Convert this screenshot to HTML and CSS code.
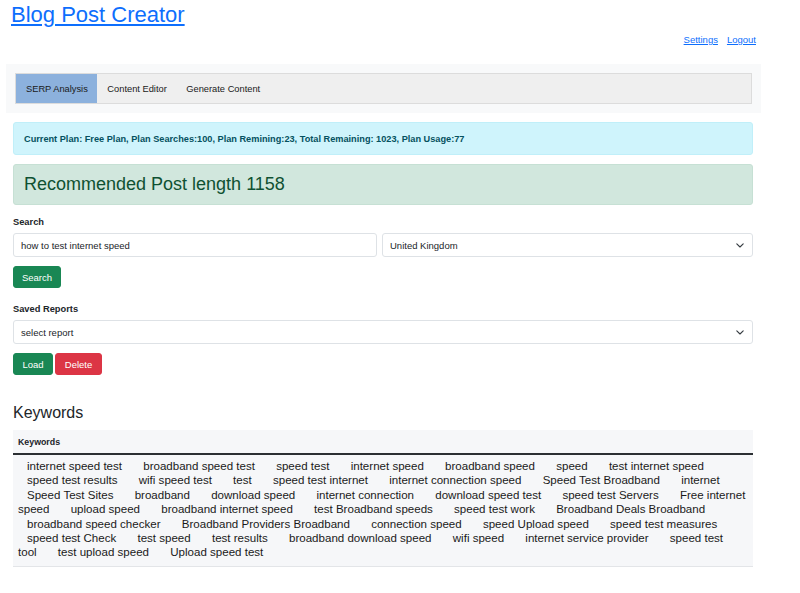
FILE: index.html
```html
<!DOCTYPE html>
<html>
<head>
<meta charset="utf-8">
<title>Blog Post Creator</title>
<link rel="stylesheet" href="styles.css">
</head>
<body>
<header class="top">
  <h1 class="brand"><a href="#">Blog Post Creator</a></h1>
  <div class="user-links"><a href="#">Settings</a><a href="#">Logout</a></div>
</header>
<nav class="nav-wrap">
  <div class="tabs">
    <span class="tab active">SERP Analysis</span>
    <span class="tab">Content Editor</span>
    <span class="tab">Generate Content</span>
  </div>
</nav>
<main class="content">
  <div class="alert alert-info">Current Plan: Free Plan, Plan Searches:100, Plan Remining:23, Total Remaining: 1023, Plan Usage:77</div>
  <div class="alert alert-success">Recommended Post length 1158</div>

  <div class="label label-search">Search</div>
  <div class="search-row">
    <div class="control">how to test internet speed</div>
    <div class="control select">
      <span>United Kingdom</span>
      <svg width="8" height="5" viewBox="0 0 8 5"><path d="M0.8 0.8 L4 4 L7.2 0.8" fill="none" stroke="#343a40" stroke-width="1.1" stroke-linecap="round" stroke-linejoin="round"/></svg>
    </div>
  </div>
  <div class="btn-row"><button class="btn btn-green">Search</button></div>

  <div class="label label-saved">Saved Reports</div>
  <div class="control select">
    <span>select report</span>
    <svg width="8" height="5" viewBox="0 0 8 5"><path d="M0.8 0.8 L4 4 L7.2 0.8" fill="none" stroke="#343a40" stroke-width="1.1" stroke-linecap="round" stroke-linejoin="round"/></svg>
  </div>
  <div class="btn-row btn-pair"><button class="btn btn-green">Load</button><button class="btn btn-red">Delete</button></div>

  <h2 class="kw-title">Keywords</h2>
  <div class="kw-table">
    <div class="kw-head">Keywords</div>
    <div class="kw-body"><span class="kw">internet speed test</span> <span class="kw">broadband speed test</span> <span class="kw">speed test</span> <span class="kw">internet speed</span> <span class="kw">broadband speed</span> <span class="kw">speed</span> <span class="kw">test internet speed</span> <span class="kw">speed test results</span> <span class="kw">wifi speed test</span> <span class="kw">test</span> <span class="kw">speed test internet</span> <span class="kw">internet connection speed</span> <span class="kw">Speed Test Broadband</span> <span class="kw">internet</span> <span class="kw">Speed Test Sites</span> <span class="kw">broadband</span> <span class="kw">download speed</span> <span class="kw">internet connection</span> <span class="kw">download speed test</span> <span class="kw">speed test Servers</span> <span class="kw">Free internet speed</span> <span class="kw">upload speed</span> <span class="kw">broadband internet speed</span> <span class="kw">test Broadband speeds</span> <span class="kw">speed test work</span> <span class="kw">Broadband Deals Broadband</span> <span class="kw">broadband speed checker</span> <span class="kw">Broadband Providers Broadband</span> <span class="kw">connection speed</span> <span class="kw">speed Upload speed</span> <span class="kw">speed test measures</span> <span class="kw">speed test Check</span> <span class="kw">test speed</span> <span class="kw">test results</span> <span class="kw">broadband download speed</span> <span class="kw">wifi speed</span> <span class="kw">internet service provider</span> <span class="kw">speed test tool</span> <span class="kw">test upload speed</span> <span class="kw">Upload speed test</span></div>
  </div>
</main>
</body>
</html>
```

FILE: styles.css
```css
* { box-sizing: border-box; }

body {
  margin: 0;
  font-family: "Liberation Sans", Arial, sans-serif;
  color: #212529;
  background: #fff;
}

a { color: #0d6efd; }

.top {
  padding: 2px 44px 0 11px;
}

.brand {
  margin: 0;
  font-size: 22px;
  line-height: 26px;
  font-weight: 400;
}

.user-links {
  display: flex;
  justify-content: flex-end;
  gap: 9px;
  margin-top: 5px;
  font-size: 9.5px;
  line-height: 13px;
}

.nav-wrap {
  margin: 18px 0 0 6px;
  width: 755px;
  height: 49px;
  background: #f8f9fa;
  padding: 9px;
}

.tabs {
  display: flex;
  height: 31px;
  background: #efefef;
  border: 1px solid #dcdcdc;
  font-size: 9.3px;
}

.tab {
  display: flex;
  align-items: center;
  padding: 0 9.5px 0 10px;
  color: #1a1a1a;
}

.tab.active {
  background: #8cb1dd;
}

.content {
  width: 740px;
  margin-left: 13px;
  padding-top: 9px;
}

.alert {
  border-radius: 3px;
  border: 1px solid transparent;
  padding: 0 10px;
  display: flex;
  align-items: center;
}

.alert-info {
  height: 33px;
  background: #cff4fc;
  border-color: #c0eff9;
  color: #055160;
  font-weight: 700;
  font-size: 9.2px;
}

.alert-success {
  margin-top: 9px;
  height: 41px;
  background: #d1e7dd;
  border-color: #c6e0d4;
  color: #0f5132;
  font-size: 18px;
}

.label {
  font-weight: 700;
  font-size: 9.3px;
  line-height: 14px;
  margin-bottom: 4px;
}

.label-search { margin-top: 10px; }
.label-saved { margin-top: 14px; }

.search-row {
  display: grid;
  grid-template-columns: 364px 1fr;
  gap: 5px;
}

.control {
  height: 24px;
  border: 1px solid #dee2e6;
  border-radius: 3px;
  background: #fff;
  padding: 0 7px;
  display: flex;
  align-items: center;
  font-size: 9.5px;
  color: #212529;
}

.select {
  justify-content: space-between;
  padding-right: 8px;
}

.btn-row {
  margin-top: 9px;
  display: flex;
  gap: 2px;
}

.btn {
  height: 22px;
  border: 1px solid transparent;
  border-radius: 3px;
  padding: 0 7px;
  font-family: inherit;
  font-size: 9.5px;
  color: #fff;
  cursor: pointer;
}

.btn-green { background: #198754; border-color: #198754; }
.btn-red { background: #dc3545; border-color: #dc3545; }

.btn-pair .btn-green { width: 40px; }
.btn-pair .btn-red { width: 47px; }
.btn-row .btn-green:only-child { width: 48px; }

.kw-title {
  margin: 28px 0 8px;
  font-size: 16px;
  line-height: 19px;
  font-weight: 400;
}

.kw-table {
  background: #f6f7f9;
  border-bottom: 1px solid #e3e5e8;
}

.kw-head {
  height: 25px;
  padding: 0 5px;
  display: flex;
  align-items: center;
  font-weight: 700;
  font-size: 8.8px;
  border-bottom: 2px solid #2b2f33;
}

.kw-body {
  padding: 4px 0 6px 5px;
  font-size: 11.55px;
  line-height: 14.4px;
  color: #1a1a1a;
}

.kw {
  padding: 0 9px;
}
```
